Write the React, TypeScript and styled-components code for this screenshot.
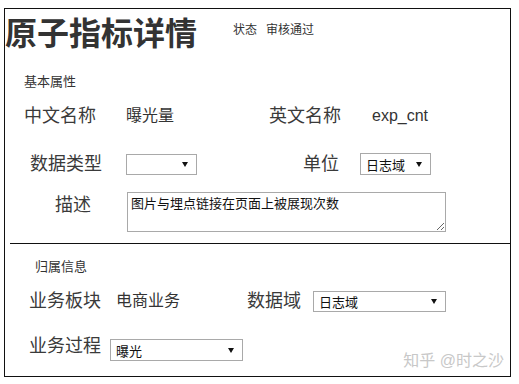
import * as React from 'react';
import styled, { createGlobalStyle } from 'styled-components';

const cjk = `"Liberation Sans", "Noto Sans CJK SC", sans-serif`;

const GlobalStyle = createGlobalStyle`
  html, body {
    margin: 0;
    padding: 0;
    background: #fff;
  }
  body {
    font-family: ${cjk};
    color: #333;
  }
`;

const Frame = styled.div`
  position: relative;
  box-sizing: border-box;
  margin: 8px 0 0 4px;
  width: 507px;
  height: 369px;
  border: 1px solid #111;
  &::after {
    content: '';
    position: absolute;
    right: -1px;
    top: 100%;
    width: 1px;
    height: 10px;
    background: #111;
  }
`;

const Header = styled.div`
  display: flex;
  align-items: flex-start;
  height: 42px;
`;

const Title = styled.h1`
  margin: 5px 0 0 0;
  font-size: 32px;
  line-height: 40px;
  font-weight: 700;
  color: #333;
  white-space: nowrap;
`;

const Status = styled.div`
  display: flex;
  gap: 9px;
  margin: 15px 0 0 36px;
  font-size: 12px;
  line-height: 12px;
  color: #333;
`;

const SectionTitle = styled.div<{ $ml: number; $mt: number }>`
  margin: ${(p) => p.$mt}px 0 0 ${(p) => p.$ml}px;
  font-size: 13px;
  line-height: 13px;
  color: #333;
`;

const Row = styled.div<{ $mt: number; $top?: boolean }>`
  display: flex;
  align-items: ${(p) => (p.$top ? 'flex-start' : 'center')};
  height: ${(p) => (p.$top ? 'auto' : '30px')};
  margin-top: ${(p) => p.$mt}px;
`;

const Label = styled.span<{ $ml: number; $mt?: number; $mb?: number }>`
  margin: ${(p) => p.$mt || 0}px 0 ${(p) => p.$mb || 0}px ${(p) => p.$ml}px;
  font-size: 18px;
  line-height: 18px;
  color: #3a3a3a;
  white-space: nowrap;
`;

const Value = styled.span<{ $ml: number }>`
  margin-left: ${(p) => p.$ml}px;
  font-size: 16px;
  line-height: 18px;
  color: #333;
  white-space: nowrap;
`;

const SelectBox = styled.div<{ $ml: number; $w: number; $h: number; $mt?: number }>`
  box-sizing: border-box;
  display: flex;
  align-items: center;
  justify-content: space-between;
  margin: ${(p) => p.$mt || 0}px 0 0 ${(p) => p.$ml}px;
  width: ${(p) => p.$w}px;
  height: ${(p) => p.$h}px;
  padding: 0 8px 0 5px;
  border: 1px solid #a9a9a9;
  background: #fff;
  font-size: 13px;
  color: #111;
`;

const Arrow = styled.svg`
  flex: none;
  width: 6px;
  height: 5px;
`;

const Memo = styled.textarea<{ $ml: number }>`
  box-sizing: border-box;
  margin: 0 0 0 ${(p) => p.$ml}px;
  width: 319px;
  height: 40px;
  padding: 2px 3px;
  border: 1px solid #a9a9a9;
  font-family: ${cjk};
  font-size: 13px;
  line-height: 17px;
  color: #111;
  resize: both;
  outline: none;
`;

const Divider = styled.hr`
  margin: 11px 0 0 5px;
  border: 0;
  border-top: 1px solid #111;
  height: 0;
`;

const Watermark = styled.div`
  position: absolute;
  right: 6px;
  bottom: 6px;
  font-size: 16px;
  line-height: 18px;
  color: #c8c8c8;
  white-space: nowrap;
`;

const Select: React.FC<{ ml: number; w: number; h?: number; mt?: number; text?: string }> = ({
  ml, w, h = 21, mt, text,
}) => (
  <SelectBox $ml={ml} $w={w} $h={h} $mt={mt}>
    <span>{text}</span>
    <Arrow viewBox='0 0 6 5'>
      <path d='M0 0 H6 L3 5 Z' fill='#111' />
    </Arrow>
  </SelectBox>
);

export default function App() {
  return (
    <>
      <GlobalStyle />
      <Frame>
        <Header>
          <Title>原子指标详情</Title>
          <Status>
            <span>状态</span>
            <span>审核通过</span>
          </Status>
        </Header>

        <SectionTitle $ml={19} $mt={24}>基本属性</SectionTitle>
        <Row $mt={13}>
          <Label $ml={19}>中文名称</Label>
          <Value $ml={30}>曝光量</Value>
          <Label $ml={95}>英文名称</Label>
          <Value $ml={31}>exp_cnt</Value>
        </Row>
        <Row $mt={18}>
          <Label $ml={25}>数据类型</Label>
          <Select ml={24} w={71} />
          <Label $ml={106}>单位</Label>
          <Select ml={21} w={71} h={22} text='日志域' />
        </Row>
        <Row $mt={13} $top>
          <Label $ml={50} $mt={4}>描述</Label>
          <Memo $ml={36} readOnly defaultValue='图片与埋点链接在页面上被展现次数' />
        </Row>

        <Divider />

        <SectionTitle $ml={30} $mt={16}>归属信息</SectionTitle>
        <Row $mt={13}>
          <Label $ml={24}>业务板块</Label>
          <Value $ml={15}>电商业务</Value>
          <Label $ml={67}>数据域</Label>
          <Select ml={12} w={133} text='日志域' />
        </Row>
        <Row $mt={17}>
          <Label $ml={24} $mb={5}>业务过程</Label>
          <Select ml={9} w={133} h={22} mt={4} text='曝光' />
        </Row>

        <Watermark>知乎 @时之沙</Watermark>
      </Frame>
    </>
  );
}
